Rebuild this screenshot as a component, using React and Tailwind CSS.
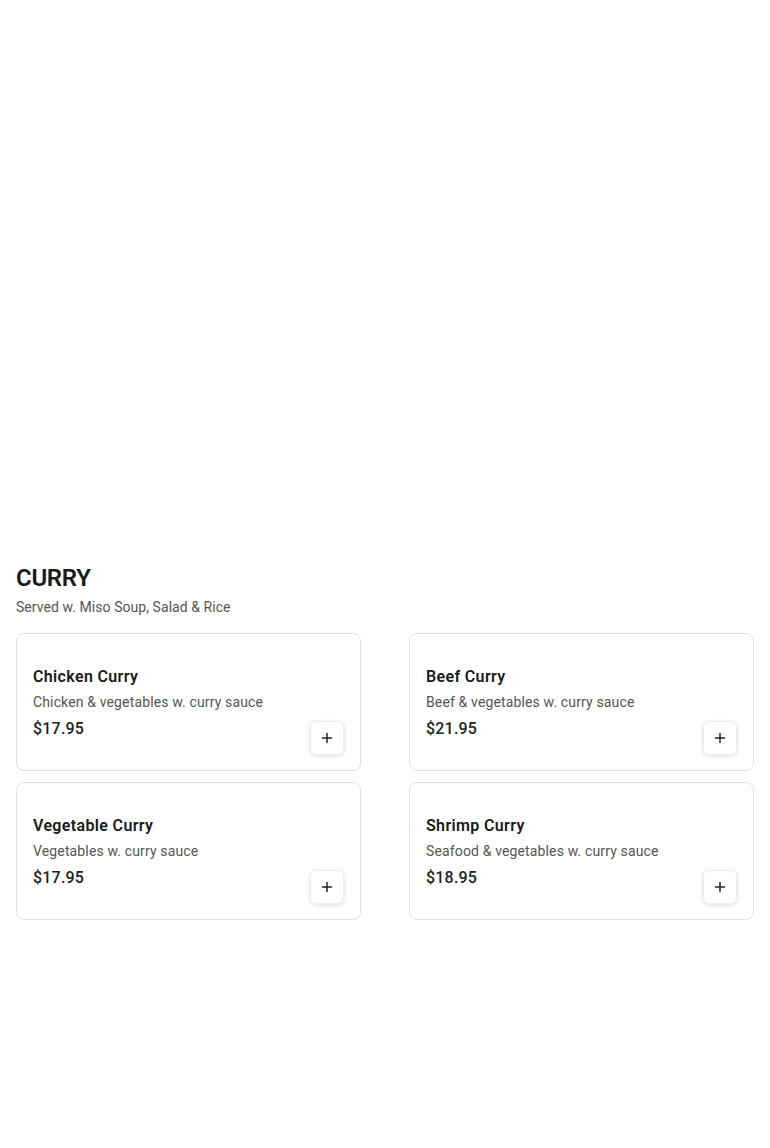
import React from "react";

const items = [
  { name: "Chicken Curry", desc: "Chicken & vegetables w. curry sauce", price: "$17.95" },
  { name: "Beef Curry", desc: "Beef & vegetables w. curry sauce", price: "$21.95" },
  { name: "Vegetable Curry", desc: "Vegetables w. curry sauce", price: "$17.95" },
  { name: "Shrimp Curry", desc: "Seafood & vegetables w. curry sauce", price: "$18.95" },
];

function Plus() {
  return (
    <svg width="12" height="12" viewBox="0 0 12 12" fill="none" stroke="#222" strokeWidth="1.5" strokeLinecap="round">
      <path d="M6 1.5v9M1.5 6h9" />
    </svg>
  );
}

export default function App() {
  return (
    <div className="min-h-[1148px] bg-white" style={{ fontFamily: "Roboto, 'Liberation Sans', sans-serif" }}>
      <div className="h-[564px]" />
      <div className="px-4">
        <h2 className="text-[24px] leading-[28px] font-semibold text-[#1a1a1a] tracking-[-0.3px]">CURRY</h2>
        <p className="mt-[5px] text-[14px] leading-[20px] text-[#555] tracking-[0.06px]">Served w. Miso Soup, Salad &amp; Rice</p>
        <div className="mt-[16px] grid grid-cols-2 gap-x-12 gap-y-[11px]">
          {items.map((it) => (
            <div key={it.name} className="rounded-lg border border-[#e2e2e2] bg-white px-4 pt-[31px] pb-[15px]">
              <div className="text-[16px] leading-[24px] font-semibold text-[#1a1a1a] tracking-[0.35px]">{it.name}</div>
              <div className="mt-[3px] text-[14px] leading-[20px] text-[#555] tracking-[0.14px]">{it.desc}</div>
              <div className="mt-[5px] flex items-start justify-between">
                <div className="text-[16px] leading-[24px] font-medium text-[#222] tracking-[0.2px]">{it.price}</div>
                <button className="mt-[4px] flex h-[34px] w-[34px] items-center justify-center rounded-md border border-[#eee] bg-white shadow-[0_1px_4px_rgba(0,0,0,0.15)]">
                  <Plus />
                </button>
              </div>
            </div>
          ))}
        </div>
      </div>
    </div>
  );
}
